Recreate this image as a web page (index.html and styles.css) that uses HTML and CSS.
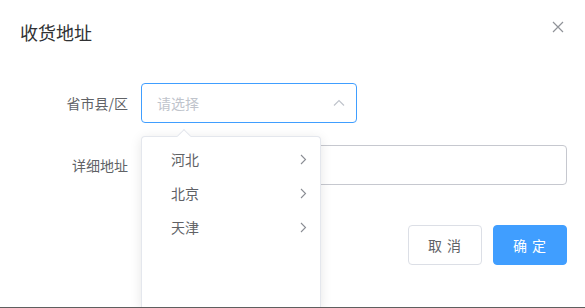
FILE: index.html
```html
<!DOCTYPE html>
<html lang="zh-CN">

<head>

    <meta charset="UTF-8">
    <meta name="viewport" content="width=device-width, initial-scale=1.0">
    <title>收货地址</title>

    <link rel="stylesheet" href="styles.css">

</head>

<body>

    <div class="dialog">

        <div class="dialog-header">
            <span class="dialog-title">收货地址</span>
            <button class="dialog-close" aria-label="关闭">
                <svg width="12" height="12" viewBox="0 0 12 12">
                    <path d="M1 1 L11 11 M11 1 L1 11" stroke="#909399" stroke-width="1.2" fill="none" />
                </svg>
            </button>
        </div>

        <div class="dialog-body">

            <div class="form-item">
                <label class="form-label">省市县/区</label>
                <div class="form-content">
                    <div class="cascader">
                        <span class="placeholder">请选择</span>
                        <svg class="arrow-up" width="12" height="8" viewBox="0 0 12 8">
                            <path d="M1 6.5 L6 1.5 L11 6.5" stroke="#c0c4cc" stroke-width="1.2" fill="none" />
                        </svg>
                    </div>
                </div>
            </div>

            <div class="form-item">
                <label class="form-label">详细地址</label>
                <div class="form-content">
                    <input class="text-input" type="text">
                </div>
            </div>

        </div>

        <div class="dialog-footer">
            <button class="btn">取 消</button>
            <button class="btn btn-primary">确 定</button>
        </div>

        <div class="cascader-menu">
            <span class="menu-arrow"></span>
            <ul>
                <li>河北<svg width="7" height="11" viewBox="0 0 7 11"><path d="M1 1 L5.5 5.5 L1 10" stroke="#8a8d94" stroke-width="1.1" fill="none" /></svg></li>
                <li>北京<svg width="7" height="11" viewBox="0 0 7 11"><path d="M1 1 L5.5 5.5 L1 10" stroke="#8a8d94" stroke-width="1.1" fill="none" /></svg></li>
                <li>天津<svg width="7" height="11" viewBox="0 0 7 11"><path d="M1 1 L5.5 5.5 L1 10" stroke="#8a8d94" stroke-width="1.1" fill="none" /></svg></li>
            </ul>
        </div>

    </div>

</body>

</html>
```

FILE: styles.css
```css
html {
    background-color: #5f5f5f;
}

body {
    margin: 0;
    font-family: "Noto Sans CJK SC", "Noto Sans", sans-serif;
    overflow: hidden;
}

.dialog {
    position: relative;
    background-color: #fff;
    width: 585px;
    height: 307px;
}

.dialog-header {
    display: flex;
    justify-content: space-between;
    align-items: center;
    padding: 20px 20px 10px 20px;
    height: 24px;
}

.dialog-title {
    font-size: 18px;
    line-height: 24px;
    color: #303133;
}

.dialog-close {
    background: none;
    border: none;
    padding: 0;
    margin-right: 1px;
    margin-top: -10px;
    display: flex;
    cursor: pointer;
}

.dialog-body {
    padding: 29px 18px 30px 20px;
}

.form-item {
    display: flex;
    align-items: center;
    margin-bottom: 22px;
}

.form-item:last-child {
    margin-bottom: 0;
}

.form-label {
    width: 108px;
    padding-right: 13px;
    text-align: right;
    font-size: 14px;
    color: #606266;
}

.form-content {
    flex: 1;
}

.cascader {
    height: 38px;
    border: 1px solid #409eff;
    border-radius: 4px;
    display: flex;
    align-items: center;
    justify-content: space-between;
    padding: 0 11px 0 15px;
    box-sizing: content-box;
    width: 188px;
}

.placeholder {
    font-size: 14px;
    color: #c0c4cc;
}

.text-input {
    display: block;
    width: 100%;
    height: 40px;
    box-sizing: border-box;
    border: 1px solid #c6c8cf;
    border-radius: 4px;
    padding: 0 15px;
    outline: none;
}

.dialog-footer {
    display: flex;
    justify-content: flex-end;
    gap: 11px;
    padding: 10px 18px 20px 20px;
}

.btn {
    width: 74px;
    height: 40px;
    border: 1px solid #dcdfe6;
    border-radius: 4px;
    background-color: #fff;
    color: #606266;
    font-family: "Noto Sans CJK SC", sans-serif;
    font-size: 14px;
    letter-spacing: 1px;
    cursor: pointer;
}

.btn-primary {
    background-color: #409eff;
    border-color: #409eff;
    color: #fff;
}

.cascader-menu {
    position: absolute;
    left: 141px;
    top: 136px;
    width: 180px;
    height: 172px;
    background-color: #fff;
    border: 1px solid #e4e7ed;
    border-bottom: none;
    border-radius: 4px 4px 0 0;
    box-shadow: 0 2px 12px rgba(0, 0, 0, 0.1);
    box-sizing: border-box;
}

.menu-arrow {
    position: absolute;
    top: -6px;
    left: 37px;
    width: 9px;
    height: 9px;
    background-color: #fff;
    border-top: 1px solid #e4e7ed;
    border-left: 1px solid #e4e7ed;
    transform: rotate(45deg);
}

.cascader-menu ul {
    list-style: none;
    margin: 0;
    padding: 5px 0;
}

.cascader-menu li {
    display: flex;
    justify-content: space-between;
    align-items: center;
    height: 34px;
    padding: 0 13px 0 29px;
    font-size: 14px;
    color: #606266;
}
```
